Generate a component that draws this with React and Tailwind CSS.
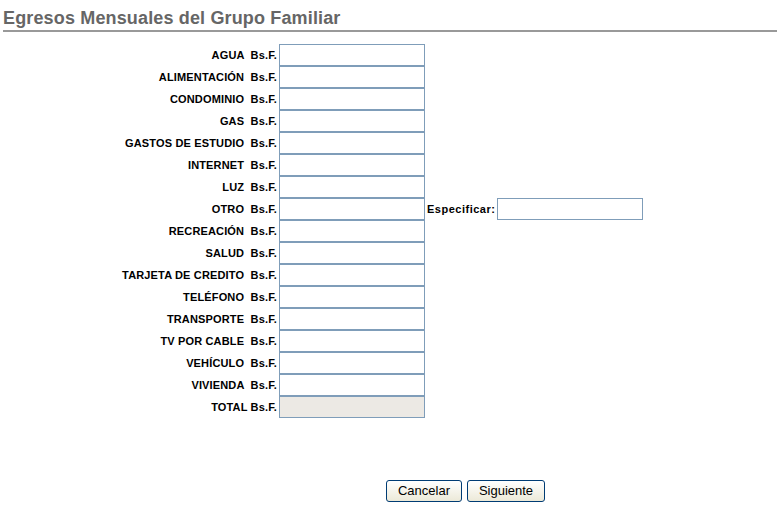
import React from 'react';

const rows = [
  'AGUA',
  'ALIMENTACIÓN',
  'CONDOMINIO',
  'GAS',
  'GASTOS DE ESTUDIO',
  'INTERNET',
  'LUZ',
  'OTRO',
  'RECREACIÓN',
  'SALUD',
  'TARJETA DE CREDITO',
  'TELÉFONO',
  'TRANSPORTE',
  'TV POR CABLE',
  'VEHÍCULO',
  'VIVIENDA',
];

const labelCls =
  "w-[274px] text-right whitespace-pre text-[11px] font-bold tracking-[0.15px] text-black";
const inputCls =
  "ml-[2px] w-[146px] h-[22px] box-border border border-[#7f9db9] bg-white outline-none text-[12px] px-1";

const App = () => {
  return (
    <div className="min-h-screen bg-white" style={{ fontFamily: '"Liberation Sans", Arial, sans-serif' }}>
      <div className="ml-[3px]">
        {/* Title */}
        <div className="h-[32px] border-b-2 border-[#999999] flex items-end">
          <h1 className="text-[18px] font-bold text-[#666666] leading-[22px] pb-[1px] tracking-[0.15px]">
            Egresos Mensuales del Grupo Familiar
          </h1>
        </div>

        {/* Rows */}
        <div className="mt-[12px] flex flex-col">
          {rows.map((name) => (
            <div key={name} className="flex items-center h-[22px]">
              <span className={labelCls}>{name + '  Bs.F.'}</span>
              <input type="text" className={inputCls} />
              {name === 'OTRO' && (
                <>
                  <span className="ml-[2px] text-[11px] font-bold tracking-[0.5px] text-black">Especificar:</span>
                  <input type="text" className="ml-[2px] w-[146px] h-[22px] box-border border border-[#7f9db9] bg-white outline-none" />
                </>
              )}
            </div>
          ))}
          <div className="flex items-center h-[22px]">
            <span className={labelCls}>TOTAL Bs.F.</span>
            <input type="text" readOnly className="ml-[2px] w-[146px] h-[22px] box-border border border-[#7f9db9] bg-[#ece9e4] outline-none" />
          </div>
        </div>

        {/* Buttons */}
        <div className="mt-[62px] ml-[383px] flex gap-[5px]">
          <button className="w-[76px] h-[22px] border border-[#003c74] rounded-[3px] bg-gradient-to-b from-white to-[#ece9d8] text-[13px] text-black">
            Cancelar
          </button>
          <button className="w-[78px] h-[22px] border border-[#003c74] rounded-[3px] bg-gradient-to-b from-white to-[#ece9d8] text-[13px] text-black">
            Siguiente
          </button>
        </div>
      </div>
    </div>
  );
};

export default App;
